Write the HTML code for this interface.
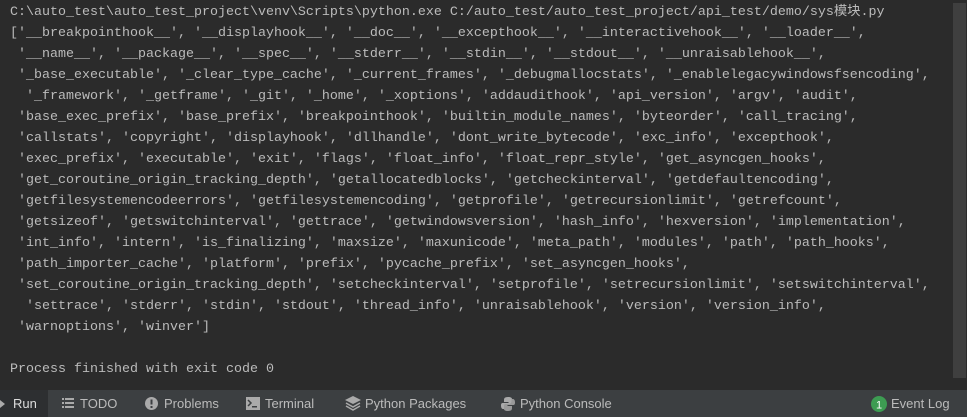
<!DOCTYPE html>
<html><head><meta charset="utf-8"><style>
body{margin:0;width:967px;height:417px;background:#2b2b2b;overflow:hidden;position:relative}
.c{position:absolute;left:10px;top:2px;margin:0;font-family:"Liberation Mono","Noto Sans CJK SC",monospace;font-size:13.33px;color:#bbbbbb}
.c div{height:21px;line-height:21px;white-space:pre;overflow:visible}
.sb{position:absolute;left:953px;top:3px;width:13px;height:375px;background:#3f3f3f}
.bar{position:absolute;left:0;top:390px;width:967px;height:27px;background:#3c3f41;font-family:"Liberation Sans",sans-serif;font-size:13px;color:#bbbbbb}
.bar span{position:absolute;top:6px}
.run{position:absolute;left:0;top:0;width:48px;height:27px;background:#2d2f31}
</style></head><body>
<div class="c">
<div>C:\auto_test\auto_test_project\venv\Scripts\python.exe C:/auto_test/auto_test_project/api_test/demo/sys模块.py</div>
<div>['__breakpointhook__', '__displayhook__', '__doc__', '__excepthook__', '__interactivehook__', '__loader__',</div>
<div> '__name__', '__package__', '__spec__', '__stderr__', '__stdin__', '__stdout__', '__unraisablehook__',</div>
<div> '_base_executable', '_clear_type_cache', '_current_frames', '_debugmallocstats', '_enablelegacywindowsfsencoding',</div>
<div>  '_framework', '_getframe', '_git', '_home', '_xoptions', 'addaudithook', 'api_version', 'argv', 'audit',</div>
<div> 'base_exec_prefix', 'base_prefix', 'breakpointhook', 'builtin_module_names', 'byteorder', 'call_tracing',</div>
<div> 'callstats', 'copyright', 'displayhook', 'dllhandle', 'dont_write_bytecode', 'exc_info', 'excepthook',</div>
<div> 'exec_prefix', 'executable', 'exit', 'flags', 'float_info', 'float_repr_style', 'get_asyncgen_hooks',</div>
<div> 'get_coroutine_origin_tracking_depth', 'getallocatedblocks', 'getcheckinterval', 'getdefaultencoding',</div>
<div> 'getfilesystemencodeerrors', 'getfilesystemencoding', 'getprofile', 'getrecursionlimit', 'getrefcount',</div>
<div> 'getsizeof', 'getswitchinterval', 'gettrace', 'getwindowsversion', 'hash_info', 'hexversion', 'implementation',</div>
<div> 'int_info', 'intern', 'is_finalizing', 'maxsize', 'maxunicode', 'meta_path', 'modules', 'path', 'path_hooks',</div>
<div> 'path_importer_cache', 'platform', 'prefix', 'pycache_prefix', 'set_asyncgen_hooks',</div>
<div> 'set_coroutine_origin_tracking_depth', 'setcheckinterval', 'setprofile', 'setrecursionlimit', 'setswitchinterval',</div>
<div>  'settrace', 'stderr', 'stdin', 'stdout', 'thread_info', 'unraisablehook', 'version', 'version_info',</div>
<div> 'warnoptions', 'winver']</div>
<div> </div>
<div>Process finished with exit code 0</div>
</div>
<div class="sb"></div>
<div class="bar">
<div class="run"></div>
<svg style="position:absolute;left:0;top:10px" width="6" height="8"><path d="M0 0L5 4L0 8Z" fill="#aaa"/></svg>
<span style="left:13px;color:#ddd">Run</span>
<svg style="position:absolute;left:62px;top:8px" width="12" height="11"><g fill="#aaa"><rect x="0" y="0" width="2" height="2"/><rect x="3" y="0" width="9" height="2"/><rect x="0" y="4" width="2" height="2"/><rect x="3" y="4" width="9" height="2"/><rect x="0" y="8" width="2" height="2"/><rect x="3" y="8" width="9" height="2"/></g></svg>
<span style="left:80px">TODO</span>
<svg style="position:absolute;left:145px;top:7px" width="13" height="13"><circle cx="6.5" cy="6.5" r="6.5" fill="#aaa"/><rect x="5.5" y="2.5" width="2" height="5" fill="#3c3f41"/><rect x="5.5" y="9" width="2" height="2" fill="#3c3f41"/></svg>
<span style="left:164px">Problems</span>
<svg style="position:absolute;left:246px;top:7px" width="14" height="13"><rect width="14" height="13" fill="#aaa"/><path d="M2 3L5 6L2 9" stroke="#3c3f41" stroke-width="1.5" fill="none"/><rect x="6" y="9" width="5" height="1.5" fill="#3c3f41"/></svg>
<span style="left:265px">Terminal</span>
<svg style="position:absolute;left:345px;top:6px" width="16" height="15"><path d="M8 0L16 4L8 8L0 4Z" fill="#aaa"/><path d="M1 7L8 11L15 7M1 10L8 14L15 10" stroke="#aaa" stroke-width="1.5" fill="none"/></svg>
<span style="left:365px">Python Packages</span>
<svg style="position:absolute;left:501px;top:7px" width="14" height="14"><path d="M7 0C3 0 3 2 3 3V5H7.5V6H1.5C0 6 0 8 0 8.5C0 11 1 12 2 12H3.5V9.5C3.5 8 5 7 6 7H9.5C10.5 7 11 6.5 11 5.5V2C11 1 10 0 7 0Z" fill="#aaa"/><path d="M7 14C11 14 11 12 11 11V9H6.5V8H12.5C14 8 14 6 14 5.5C14 3 13 2 12 2H10.5V4.5C10.5 6 9 7 8 7H4.5C3.5 7 3 7.5 3 8.5V12C3 13 4 14 7 14Z" fill="#999"/></svg>
<span style="left:520px">Python Console</span>
<svg style="position:absolute;left:871px;top:6px" width="16" height="16"><circle cx="8" cy="8" r="8" fill="#3d9c52"/><text x="8" y="12.5" font-family="Liberation Sans" font-size="11" fill="#fff" text-anchor="middle">1</text></svg>
<span style="left:891px">Event Log</span>
</div>
</body></html>
